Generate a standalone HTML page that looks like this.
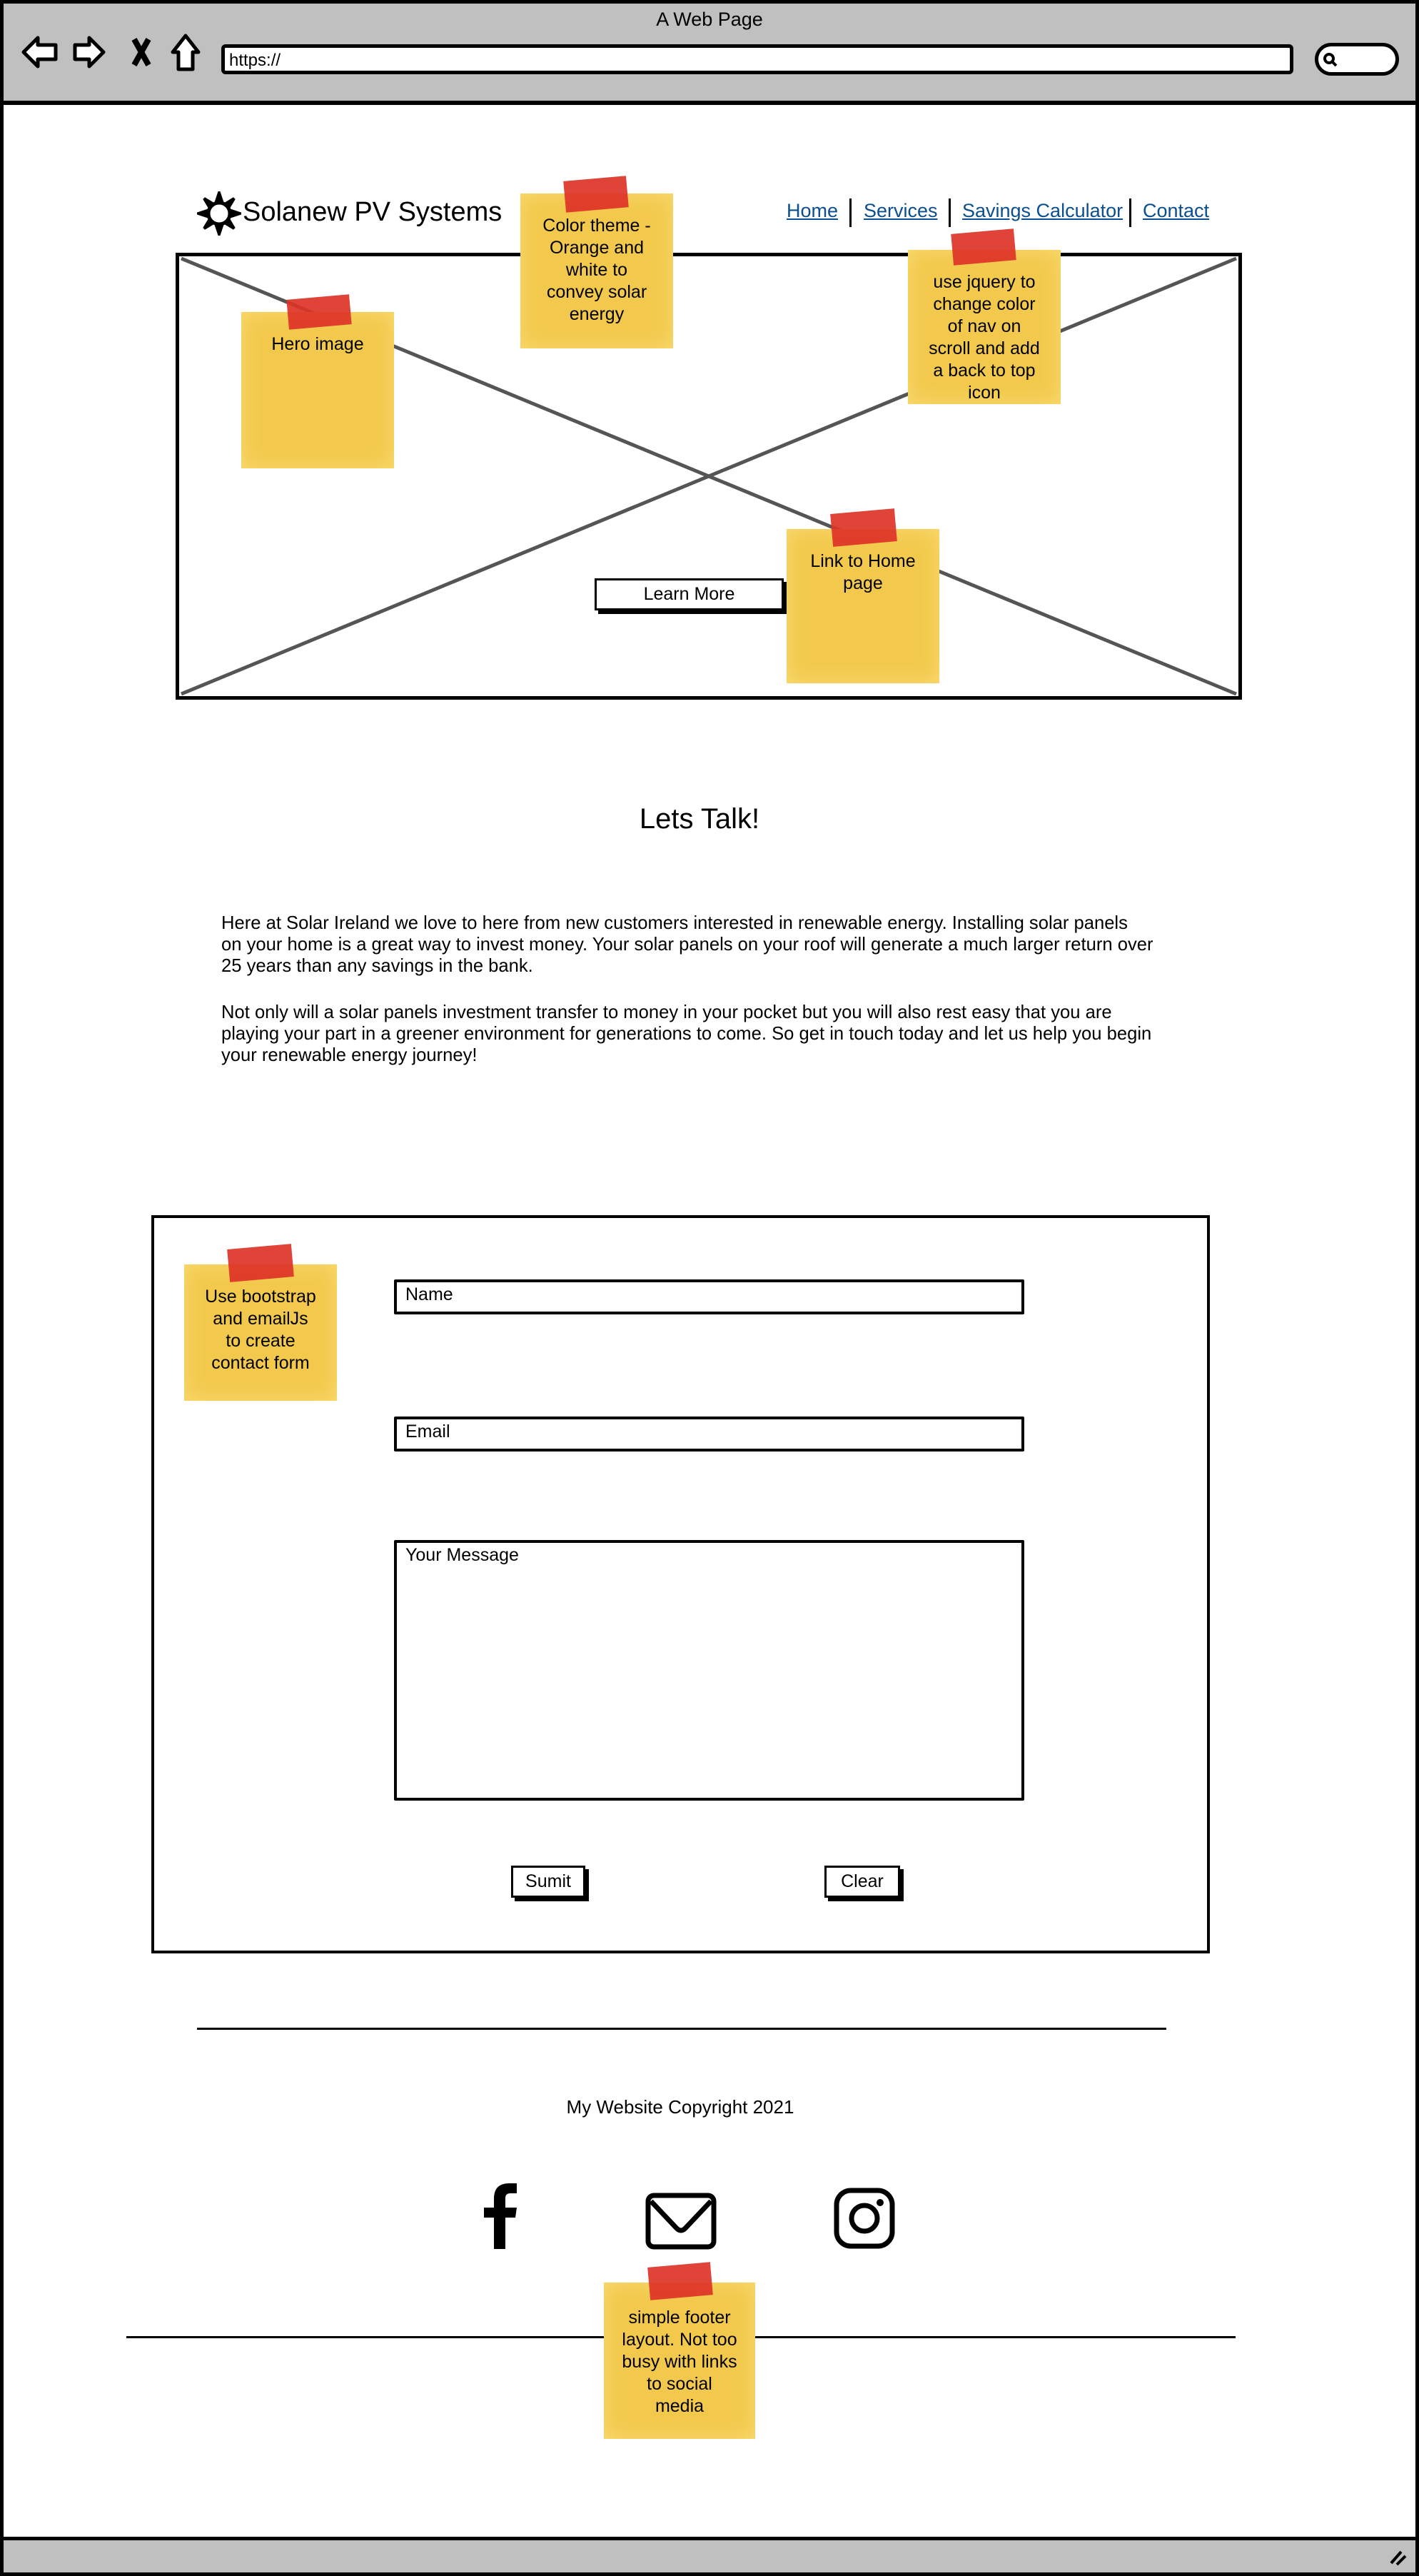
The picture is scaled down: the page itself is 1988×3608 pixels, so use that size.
<!DOCTYPE html>
<html><head><meta charset="utf-8"><style>
*{margin:0;padding:0;box-sizing:border-box}
body{width:1988px;height:3608px;position:relative;background:#fff;font-family:"Liberation Sans Narrow","Liberation Sans",sans-serif;color:#000;overflow:hidden}
.a{position:absolute}
.note{position:absolute;background:#f2c94c;box-shadow:inset 0 0 30px rgba(255,230,140,.6);display:flex;align-items:flex-start;justify-content:center;text-align:center;font-size:25px;line-height:31px;padding-top:48px}
.tape{position:absolute;background:#dd3327;opacity:.92;transform:rotate(-5deg)}
.link{position:absolute;top:280px;font-size:27px;color:#0b4f91;text-decoration:underline}
.sep{position:absolute;top:278px;width:3px;height:40px;background:#000}
.inp{position:absolute;border:4px solid #000;border-radius:2px;font-size:25px;padding:3px 12px}
.btn{position:absolute;border:3px solid #000;box-shadow:5px 5px 0 #000;background:#fff;font-size:25px;text-align:center}
p.t{position:absolute;left:310px;font-size:25.6px;line-height:30.5px;white-space:nowrap}
</style></head><body>
<!-- frame -->
<div class="a" style="left:0;top:0;width:1988px;height:3608px;border:5px solid #000"></div>
<div class="a" style="left:0;top:0;width:1988px;height:147px;background:#c0c0c0;border:5px solid #000;border-bottom-width:6px"></div>
<div class="a" style="left:0;top:12px;width:1988px;text-align:center;font-size:27px">A Web Page</div>
<svg class="a" style="left:28px;top:45px" width="280" height="60" viewBox="0 0 280 60">
<path d="M5 28 L25 8 L25 18 L50 18 L50 38 L25 38 L25 48 Z" fill="#fff" stroke="#000" stroke-width="5" stroke-linejoin="round"/>
<path d="M95 28 L75 8 L75 18 L55 18 L55 38 L75 38 L75 48 Z" fill="#fff" stroke="#000" stroke-width="5" stroke-linejoin="round" transform="translate(22,0)"/>
<path d="M160 10 L180 46 M180 10 L160 46" stroke="#000" stroke-width="8"/>
<path d="M232 5 L250 28 L242 28 L242 52 L222 52 L222 28 L214 28 Z" fill="#fff" stroke="#000" stroke-width="5" stroke-linejoin="round"/>
</svg>
<div class="a" style="left:310px;top:62px;width:1502px;height:42px;background:#fff;border:5px solid #000;border-radius:6px;font-size:24px;padding:4px 6px">https://</div>
<div class="a" style="left:1842px;top:60px;width:118px;height:46px;background:#fff;border:5px solid #000;border-radius:23px"></div>
<svg class="a" style="left:1852px;top:72px" width="24" height="24"><circle cx="10" cy="10" r="6" fill="none" stroke="#000" stroke-width="4"/><path d="M14 14 L20 20" stroke="#000" stroke-width="4"/></svg>
<div class="a" style="left:0;top:3553px;width:1988px;height:55px;background:#c0c0c0;border:5px solid #000"></div>
<svg class="a" style="left:1945px;top:3566px" width="30" height="30"><path d="M4 24 L18 8 M12 26 L24 14" stroke="#000" stroke-width="4"/></svg>

<!-- header -->
<svg class="a" style="left:276px;top:268px" width="62" height="62" viewBox="0 0 62 62">
<g stroke="#000" stroke-width="4" fill="#000">
<path d="M31 2 L35 14 L27 14Z M31 60 L35 48 L27 48Z M2 31 L14 27 L14 35Z M60 31 L48 27 L48 35Z M10 10 L20 16 L16 20Z M52 52 L42 46 L46 42Z M52 10 L46 20 L42 16Z M10 52 L16 42 L20 46Z"/>
</g>
<circle cx="31" cy="31" r="15" fill="#fff" stroke="#000" stroke-width="5"/>
</svg>
<div class="a" style="left:340px;top:276px;font-size:38px">Solanew PV Systems</div>
<div class="link" style="left:1102px">Home</div>
<div class="sep" style="left:1190px"></div>
<div class="link" style="left:1210px">Services</div>
<div class="sep" style="left:1329px"></div>
<div class="link" style="left:1348px">Savings Calculator</div>
<div class="sep" style="left:1582px"></div>
<div class="link" style="left:1601px">Contact</div>

<!-- hero -->
<div class="a" style="left:246px;top:354px;width:1494px;height:626px;border:5px solid #000"></div>
<svg class="a" style="left:246px;top:354px" width="1494" height="626"><path d="M8 8 L1486 618 M1486 8 L8 618" stroke="#555" stroke-width="5"/></svg>
<div class="btn" style="left:833px;top:810px;width:265px;height:45px;line-height:38px">Learn More</div>

<!-- text -->
<div class="a" style="left:0;top:1125px;width:1960px;text-align:center;font-size:40px">Lets Talk!</div>
<p class="t" style="top:1278px">Here at Solar Ireland we love to here from new customers interested in renewable energy. Installing solar panels</p>
<p class="t" style="top:1308px">on your home is a great way to invest money. Your solar panels on your roof will generate a much larger return over</p>
<p class="t" style="top:1338px">25 years than any savings in the bank.</p>
<p class="t" style="top:1403px">Not only will a solar panels investment transfer to money in your pocket but you will also rest easy that you are</p>
<p class="t" style="top:1433px">playing your part in a greener environment for generations to come. So get in touch today and let us help you begin</p>
<p class="t" style="top:1463px">your renewable energy journey!</p>

<!-- form -->
<div class="a" style="left:212px;top:1702px;width:1483px;height:1034px;border:4px solid #000"></div>
<div class="inp" style="left:552px;top:1792px;width:883px;height:49px">Name</div>
<div class="inp" style="left:552px;top:1984px;width:883px;height:49px">Email</div>
<div class="inp" style="left:552px;top:2157px;width:883px;height:365px">Your Message</div>
<div class="btn" style="left:716px;top:2613px;width:104px;height:45px;line-height:38px">Sumit</div>
<div class="btn" style="left:1155px;top:2613px;width:106px;height:45px;line-height:38px">Clear</div>

<!-- footer -->
<div class="a" style="left:276px;top:2840px;width:1358px;height:3px;background:#000"></div>
<div class="a" style="left:0;top:2936px;width:1906px;text-align:center;font-size:26px">My Website Copyright 2021</div>
<svg class="a" style="left:678px;top:3058px" width="54" height="92" viewBox="0 0 54 92"><path d="M14 92 L14 48 L0 48 L0 34 L14 34 L14 22 C14 6 22 0 36 0 L46 0 L46 14 L38 14 C31 14 30 17 30 22 L30 34 L46 34 L44 48 L30 48 L30 92 Z" fill="#000"/></svg>
<svg class="a" style="left:904px;top:3071px" width="100" height="80" viewBox="0 0 100 80"><rect x="4" y="4" width="92" height="72" rx="8" fill="none" stroke="#000" stroke-width="7"/><path d="M8 12 L44 50 Q50 56 56 50 L92 12" fill="none" stroke="#000" stroke-width="7"/></svg>
<svg class="a" style="left:1168px;top:3064px" width="86" height="86" viewBox="0 0 86 86"><rect x="4" y="4" width="78" height="78" rx="20" fill="none" stroke="#000" stroke-width="7"/><circle cx="43" cy="43" r="18" fill="none" stroke="#000" stroke-width="7"/><circle cx="65" cy="21" r="5" fill="#000"/></svg>
<div class="a" style="left:177px;top:3272px;width:1554px;height:3px;background:#000"></div>

<!-- notes -->
<div class="note" style="left:338px;top:437px;width:214px;height:219px;padding-top:30px">Hero image</div>
<div class="tape" style="left:403px;top:416px;width:88px;height:42px"></div>
<div class="note" style="left:729px;top:271px;width:214px;height:217px;padding-top:30px">Color theme -<br>Orange and<br>white to<br>convey solar<br>energy</div>
<div class="tape" style="left:791px;top:250px;width:88px;height:44px"></div>
<div class="note" style="left:1272px;top:350px;width:214px;height:216px;padding-top:30px">use jquery to<br>change color<br>of nav on<br>scroll and add<br>a back to top<br>icon</div>
<div class="tape" style="left:1334px;top:324px;width:88px;height:44px"></div>
<div class="note" style="left:1102px;top:741px;width:214px;height:216px;padding-top:30px">Link to Home<br>page</div>
<div class="tape" style="left:1165px;top:716px;width:90px;height:46px"></div>
<div class="note" style="left:258px;top:1771px;width:214px;height:191px;padding-top:30px">Use bootstrap<br>and emailJs<br>to create<br>contact form</div>
<div class="tape" style="left:320px;top:1746px;width:90px;height:46px"></div>
<div class="note" style="left:846px;top:3197px;width:212px;height:219px;padding-top:34px">simple footer<br>layout. Not too<br>busy with links<br>to social<br>media</div>
<div class="tape" style="left:909px;top:3172px;width:88px;height:46px"></div>
</body></html>
